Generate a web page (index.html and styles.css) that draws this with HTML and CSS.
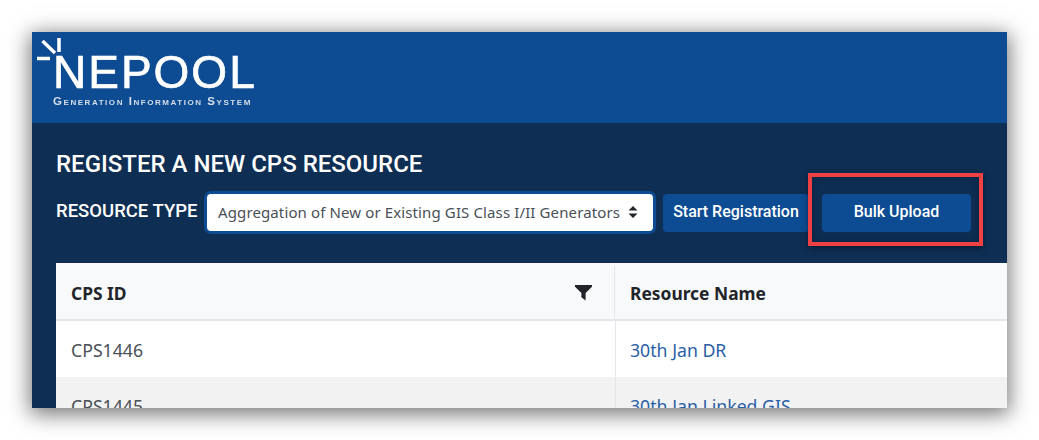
FILE: index.html
```html
<!DOCTYPE html>
<html lang="en">
<head>
<meta charset="utf-8">
<title>NEPOOL GIS</title>
<link rel="stylesheet" href="styles.css">
</head>
<body>
<div class="window">
  <header class="brand">
    <div class="logo">
      <svg class="rays" width="34" height="34" viewBox="0 0 34 34" aria-hidden="true">
        <path d="M22 1v14M5.500 4l12.500 12M0 21.500h13" fill="none" stroke="#fff" stroke-width="3.500"/>
      </svg>
      <div class="wordmark">NEPOOL</div>
      <div class="tagline">Generation Information System</div>
    </div>
  </header>
  <main class="content">
    <h1 class="title">REGISTER A NEW CPS RESOURCE</h1>
    <div class="controls">
      <span class="type-label">RESOURCE TYPE</span>
      <div class="select">
        <span>Aggregation of New or Existing GIS Class I/II Generators</span>
        <svg width="10" height="14" viewBox="0 0 10 14" aria-hidden="true"><path d="M5 1l4.500 4.500H.5zM5 13L.5 8.500h9z" fill="#212529"/></svg>
      </div>
      <button class="btn btn-start">Start Registration</button>
      <button class="btn btn-bulk">Bulk Upload</button>
      <div class="highlight"></div>
    </div>
    <div class="table">
      <div class="row head">
        <div class="cell first">CPS ID
          <svg width="17" height="17" viewBox="0 0 16 16" aria-hidden="true"><path d="M0 1h16v1.500L10 8.500V15.500l-4-3V8.500L0 2.500z" fill="#212529"/></svg>
        </div>
        <div class="cell">Resource Name</div>
      </div>
      <div class="row data">
        <div class="cell first">CPS1446</div>
        <div class="cell"><a href="#">30th Jan DR</a></div>
      </div>
      <div class="row data alt">
        <div class="cell first">CPS1445</div>
        <div class="cell"><a href="#">30th Jan Linked GIS</a></div>
      </div>
    </div>
  </main>
</div>
</body>
</html>
```
FILE: styles.css
```css
* { box-sizing: border-box; }
html, body { margin: 0; height: 100%; background: #fff; overflow: hidden; }
body { padding: 32px 32px 0; }

.window {
  width: 975px;
  height: 376px;
  overflow: hidden;
  display: flex;
  flex-direction: column;
  background: #0e2e53;
  box-shadow: 0 4px 20px 2px rgba(0, 0, 0, .55);
}

.brand {
  height: 91px;
  flex: none;
  background: #0d4c92;
  padding: 4px 0 0 5px;
}
.logo { position: relative; width: 225px; height: 80px; color: #fff; filter: blur(.35px); }
.rays { position: absolute; left: 0; top: 1px; }
.wordmark {
  position: absolute;
  left: 16px;
  top: 14px;
  font: 400 46px/44px "Liberation Sans", sans-serif;
  letter-spacing: 2px;
  white-space: nowrap;
  -webkit-text-stroke: .7px #fff;
}
.tagline {
  position: absolute;
  left: 16px;
  top: 59px;
  font: 700 11.500px/13px "Liberation Sans", sans-serif;
  font-variant: small-caps;
  letter-spacing: 1.55px;
  color: #d5deea;
  white-space: nowrap;
}

.content { padding: 27px 0 0 24px; flex: 1; min-height: 0; }
.title {
  margin: 0;
  font: 500 24px/28px Roboto, sans-serif;
  color: #fff;
  white-space: nowrap;
}
.controls {
  position: relative;
  display: flex;
  align-items: flex-start;
  margin-top: 16px;
  height: 38px;
}
.type-label {
  width: 151px;
  flex: none;
  font: 500 18.500px/34px Roboto, sans-serif;
  color: #fff;
  white-space: nowrap;
}
.select {
  width: 446px;
  height: 37px;
  flex: none;
  display: flex;
  align-items: center;
  justify-content: space-between;
  padding: 0 15px 2px 11px;
  background: #fff;
  border-radius: 4px;
  box-shadow: 0 0 0 3px #0d4c92;
  font: 400 15px/20px "Noto Sans", sans-serif;
  letter-spacing: .12px;
  color: #495057;
  white-space: nowrap;
}
.btn {
  height: 38px;
  flex: none;
  border: 0;
  padding: 0 0 2px;
  border-radius: 4px;
  background: #0d4c92;
  color: #fff;
  font: 500 16px/20px Roboto, sans-serif;
}
.btn-start { width: 146px; margin-left: 10px; }
.btn-bulk { width: 149px; margin-left: 13px; }
.highlight {
  position: absolute;
  left: 752px;
  top: -21px;
  width: 175px;
  height: 73px;
  border: 4px solid #ef4044;
  box-shadow: 0 2px 6px rgba(0, 0, 0, .4), inset 0 0 8px rgba(0, 0, 0, .25);
  pointer-events: none;
}

.table { margin-top: 31px; background: #fff; }
.row { display: grid; grid-template-columns: 559px 1fr; height: 56px; font: 400 17.700px/24px "Noto Sans", sans-serif; color: #495057; }
.cell { display: flex; align-items: center; padding: 0 15px; }
.first { justify-content: space-between; border-right: 1px solid #e3e7ec; padding-right: 22px; }
.data .cell { padding-top: 2px; }
.data .first { width: 560px; }
.head { height: 58px; padding-top: 3px; background: #f8f9fa; border-bottom: 2px solid #e3e7ec; font-size: 17.400px; font-weight: 700; color: #212529; }
.alt { background: #f2f2f2; }
a { color: #2a5fa8; text-decoration: none; }
```
